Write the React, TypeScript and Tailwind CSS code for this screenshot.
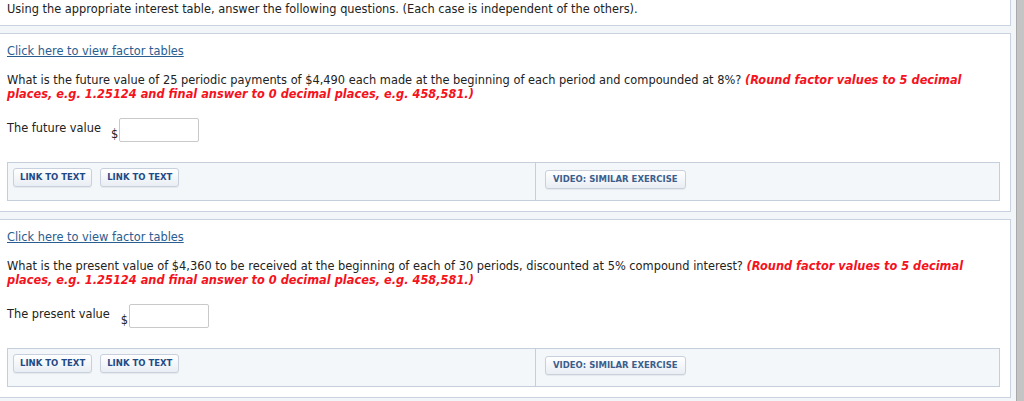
const FONT = { fontFamily: '"DejaVu Sans", Verdana, sans-serif' };

type Q = {
  text: string;
  label: string;
  labelGap: string;
};

const QUESTIONS: Q[] = [
  {
    text: "What is the future value of 25 periodic payments of $4,490 each made at the beginning of each period and compounded at 8%?",
    label: "The future value",
    labelGap: "ml-[10px]",
  },
  {
    text: "What is the present value of $4,360 to be received at the beginning of each of 30 periods, discounted at 5% compound interest?",
    label: "The present value",
    labelGap: "ml-[11px]",
  },
];

function LinkButton({ children, className = "" }: { children: React.ReactNode; className?: string }) {
  return (
    <button
      type="button"
      className={
        "h-[19px] rounded-[3px] border border-[#c7d0dc] bg-gradient-to-b from-white to-[#e9eef4] text-[8.5px] font-bold leading-none shadow-[0_1px_1px_rgba(0,0,0,0.06)] " +
        className
      }
    >
      {children}
    </button>
  );
}

function QuestionPanel({ q }: { q: Q }) {
  return (
    <div className="border-y border-r border-[#c9d3df] bg-white px-[7px] pt-[10px] pb-[10px]">
      <a href="#" className="block text-[11.4px] leading-[14px] text-[#2a5d90] underline">
        Click here to view factor tables
      </a>

      <p className="mt-[15px] w-[992px] text-[11.4px] leading-[14px] text-[#222]">
        {q.text}{" "}
        <span className="font-bold italic text-[#f5121c]">
          (Round factor values to 5 decimal places, e.g. 1.25124 and final answer to 0 decimal places, e.g. 458,581.)
        </span>
      </p>

      {/* answer row */}
      <div className="mt-[17px] flex items-start">
        <span className="mt-[3px] text-[11.4px] leading-[14px] text-[#222]">{q.label}</span>
        <div className={"flex items-end " + q.labelGap}>
          <span className="mb-[1px] text-[11.4px] leading-[14px] text-[#222]">$</span>
          <input
            className="ml-px h-[24px] w-[80px] rounded-[2px] border border-[#c9c9c9] bg-white outline-none"
            aria-label={q.label}
          />
        </div>
      </div>

      {/* links */}
      <div className="mt-[20px] flex h-[39px] w-[993px] border border-[#c5cfdb] bg-[#f4f7fa]">
        <div className="flex w-[528px] items-start gap-[8px] border-r border-[#c5cfdb] pl-[5px] pt-[5px]">
          <LinkButton className="px-[6px] text-[#1f4a86]">LINK TO TEXT</LinkButton>
          <LinkButton className="px-[6px] text-[#1f4a86]">LINK TO TEXT</LinkButton>
        </div>
        <div className="flex flex-1 items-start pl-[9px] pt-[7px]">
          <LinkButton className="h-[18px] px-[7px] text-[#3c5e8c]">VIDEO: SIMILAR EXERCISE</LinkButton>
        </div>
      </div>
    </div>
  );
}

export default function App() {
  return (
    <div className="flex h-[401px] w-[1024px] overflow-hidden bg-[#f3f6f9]" style={FONT}>
      <div className="flex w-[1011px] flex-col gap-[7px]">
        <div className="h-[26px] border-r border-b border-[#c9d3df] bg-white px-[7px] pt-[2px]">
          <p className="text-[11.4px] leading-[14px] text-[#222]">
            Using the appropriate interest table, answer the following questions. (Each case is independent of the others).
          </p>
        </div>
        {QUESTIONS.map((q, i) => (
          <QuestionPanel key={i} q={q} />
        ))}
      </div>
      <div className="flex-1" />
      <div className="w-[8px] border-l border-[#a9a9a9] bg-[#c4c4c4]" />
    </div>
  );
}
